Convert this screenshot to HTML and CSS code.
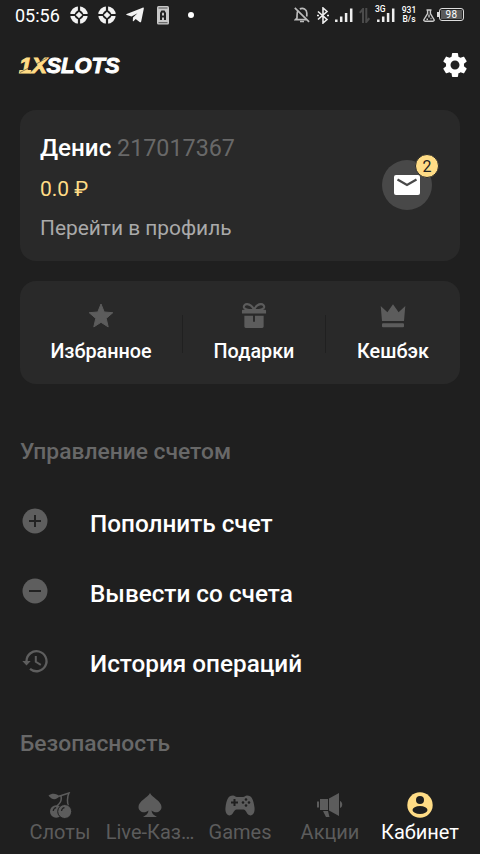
FILE: index.html
```html
<!DOCTYPE html>
<html lang="ru">
<head>
<meta charset="utf-8">
<title>1XSLOTS</title>
<link rel="stylesheet" href="styles.css">
</head>
<body>
<svg width="0" height="0" class="defs">
  <symbol id="ring" viewBox="0 0 18 18"><circle cx="9" cy="9" r="6.6" fill="none" stroke="#f2f2f2" stroke-width="4.4"/><path d="M9 0v18M0 9h18" stroke="#1f1f1f" stroke-width="2.2"/><path d="M9 5.7l3.3 3.3L9 12.3 5.7 9z" fill="#f2f2f2"/></symbol>
  <symbol id="signal" viewBox="0 0 18 15"><path d="M1.3 11.500v2.500M6.2 8.500v5.500M11.1 5V14M16.2.5V14" stroke="#eee" stroke-width="2.500"/></symbol>
</svg>
<div class="status">
  <span class="time">05:56</span>
  <svg class="ring" width="18" height="18"><use href="#ring"/></svg>
  <svg class="ring" width="18" height="18"><use href="#ring"/></svg>
  <svg class="plane" width="18" height="16" viewBox="0 0 18 16"><path fill="#f2f2f2" d="M.7 7.1L16.6.7c.8-.3 1.4.2 1.2 1.1l-2.6 12.6c-.2.9-.9 1.1-1.6.6L9.7 12l-2 2c-.4.4-.9.3-.9-.3l.2-3.200 4.500-4.300-6 3.400L.8 8.100c-.8-.2-.8-.7-.1-1z"/></svg>
  <svg class="box" width="12" height="19" viewBox="0 0 12 19"><rect width="12" height="18.5" rx="1.5" fill="#c8c8c8"/><path d="M1.5 2h9M1.5 16.7h9" stroke="#555" stroke-width="1"/><path d="M4 14V7.3L5 5.5h2l1 1.8V14M4 10.5h4" fill="none" stroke="#222" stroke-width="2"/></svg>
  <svg class="dot" width="6" height="6"><circle cx="3" cy="3" r="3" fill="#fff"/></svg>
  <svg class="bell" width="16" height="16" viewBox="0 0 16 16" fill="none" stroke="#bbb" stroke-width="1.7"><path d="M4 3.5C2.8 5 3.1 7 3 11l-1.5 1.7h11M5.8 1.9C9 .5 12.8 2 12.8 6v3.6"/><path d="M6 14.5h4M.8.8l14.3 14"/></svg>
  <svg class="bt" width="12" height="17" viewBox="0 0 12 17"><path d="M1 4.500l9 8L6 16V1l4 3.500-9 8M0 8.500h2M10 8.500h2" fill="none" stroke="#eee" stroke-width="1.600"/></svg>
  <svg class="sig" width="18" height="15"><use href="#signal"/></svg>
  <svg class="updown" width="11" height="15" viewBox="0 0 11 15"><path d="M4 15V1L.8 4.800M7.300 0v14l3-3.800" fill="none" stroke="#4b4b4b" stroke-width="2"/></svg>
  <div class="net"><span>3G</span><svg width="18" height="15"><use href="#signal"/></svg></div>
  <div class="speed">931<br>B/s</div>
  <svg class="flask" width="12" height="13" viewBox="0 0 12 13"><path d="M3.500 1h5M4.600 1v3.500L1 10.500c-.5 1 0 1.700 1 1.700h8c1 0 1.500-.7 1-1.700L7.400 4.500V1M6 5.500v3M3.500 10.200h1.500M7.500 9.500h1" fill="none" stroke="#ccc" stroke-width="1.400"/></svg>
  <div class="batt"><span>98</span></div>
</div>
<header>
  <svg class="brand" width="106" height="28" viewBox="-2 -4 106 28"><text class="logo gold" x="-1" y="15.500" textLength="28" lengthAdjust="spacingAndGlyphs">1X</text><path d="M0 15.500l12-6.200L27 1" stroke="#1f1f1f" stroke-width=".5" fill="none"/><text class="logo white" x="26.500" y="15.500" textLength="73" lengthAdjust="spacingAndGlyphs">SLOTS</text></svg>
  <svg width="30" height="30" viewBox="0 0 24 24"><path fill="#fff" d="M19.140 12.940c.040-.3.060-.610.060-.940 0-.320-.020-.640-.070-.940l2.030-1.580c.180-.140.230-.410.120-.610l-1.920-3.320c-.120-.220-.370-.290-.590-.220l-2.390.960c-.5-.380-1.030-.7-1.620-.940l-.360-2.540c-.040-.240-.240-.410-.480-.410h-3.840c-.240 0-.430.170-.470.410l-.360 2.540c-.590.240-1.130.570-1.620.940l-2.390-.960c-.220-.080-.470 0-.590.220L2.740 8.870c-.120.210-.080.470.120.610l2.030 1.580c-.050.3-.090.630-.090.940s.020.640.070.940l-2.030 1.580c-.180.140-.230.410-.120.610l1.920 3.320c.120.220.370.290.590.220l2.390-.960c.5.380 1.030.7 1.620.940l.360 2.540c.050.240.240.410.480.410h3.840c.240 0 .440-.170.470-.410l.360-2.540c.590-.240 1.130-.560 1.620-.940l2.390.960c.220.080.470 0 .590-.220l1.920-3.320c.120-.220.070-.470-.120-.610l-2.010-1.580zM12 15.600c-1.980 0-3.600-1.620-3.600-3.600s1.620-3.600 3.600-3.600 3.600 1.620 3.600 3.600-1.620 3.600-3.600 3.600z"/></svg>
</header>
<main>
  <section class="profile">
    <div>
      <p class="name"><b>Денис</b> <span>217017367</span></p>
      <p class="money">0.0 ₽</p>
      <p class="go">Перейти в профиль</p>
    </div>
    <div class="mail">
      <svg width="26" height="20" viewBox="0 0 26 20"><rect width="26" height="20" rx="2" fill="#fff"/><path d="M3.500 4.500L13 10l9.500-5.500" fill="none" stroke="#484848" stroke-width="2.200"/></svg>
      <span class="badge">2</span>
    </div>
  </section>
  <section class="quick">
    <div class="q1"><svg width="26" height="26" viewBox="0 0 26 26"><path d="M13 1.500l3.200 8 8.600.7-6.600 5.700 2 8.500-7.200-4.600-7.200 4.600 2-8.500-6.600-5.700 8.600-.7z" fill="#5c5c5c" stroke="#5c5c5c" stroke-linejoin="round"/></svg><b>Избранное</b></div>
    <i></i>
    <div class="q2"><svg width="26" height="28" viewBox="0 0 26 28"><path d="M13 8C9 9 3 8 2.500 5.500 1.800 1.500 9 0 13 8zc4 1 10 0 10.500-2.500C24.200 1.500 17 0 13 8z" fill="none" stroke="#5c5c5c" stroke-width="2.200"/><path d="M1.500 8h23a1 1 0 011 1v3H.5V9a1 1 0 011-1zM3 14.300h9v6.200h2v-6.200h9v11.200a1.500 1.500 0 01-1.500 1.500h-17A1.500 1.500 0 013 25.500z" fill="#5c5c5c"/></svg><b>Подарки</b></div>
    <i></i>
    <div class="q3"><svg width="26" height="26" viewBox="0 0 26 26"><path d="M.7 3.500l6.700 6.300L13 1.700l5.600 8.100 6.700-6.300L24 18.500H2z" fill="#5c5c5c"/><rect x="2" y="20.700" width="22" height="4" rx="1" fill="#5c5c5c"/></svg><b>Кешбэк</b></div>
  </section>
  <h2>Управление счетом</h2>
  <ul>
    <li><svg width="30" height="30" viewBox="0 0 30 30"><circle cx="15" cy="15" r="12.500" fill="#5e5e5e"/><path d="M9 15h12M15 9v12" stroke="#222" stroke-width="2"/></svg><span>Пополнить счет</span></li>
    <li><svg width="30" height="30" viewBox="0 0 30 30"><circle cx="15" cy="15" r="12.500" fill="#5e5e5e"/><path d="M9 15h12" stroke="#222" stroke-width="2"/></svg><span>Вывести со счета</span></li>
    <li><svg width="30" height="30" viewBox="0 0 30 30"><path d="M6.500 15a10 10 0 1 1 3.500 7.800" fill="none" stroke="#5e5e5e" stroke-width="2.300"/><path d="M2.300 15h8.400l-4.200 4.500z" fill="#5e5e5e"/><path d="M15.800 10v5.800l5 3" fill="none" stroke="#5e5e5e" stroke-width="2"/></svg><span>История операций</span></li>
  </ul>
  <h2 class="security">Безопасность</h2>
</main>
<nav>
  <a><svg width="30" height="28" viewBox="0 0 30 28"><path d="M3.500 3.500C7 .5 12 1.500 14.500 4 11.500 8.500 6.500 8 3.500 3.500z" fill="#5c5c5c"/><path d="M14 4.300L24 1c-2 4-2 8-.7 13M16 4c1 5-1 7-4 10" fill="none" stroke="#5c5c5c" stroke-width="1.500"/><circle cx="11.200" cy="19.500" r="6.200" fill="#5c5c5c"/><circle cx="19.700" cy="19.500" r="7" fill="#5c5c5c" stroke="#1f1f1f"/><path d="M8.200 19q.5-3 3-3.300M16.500 19q.5-3 3-3.300" stroke="#222" fill="none" stroke-width="1.200"/></svg><span>Слоты</span></a>
  <a><svg width="30" height="28" viewBox="0 0 30 28"><path d="M15 1c2 4.500 11.500 8 11.500 14 0 5-6 7-10 3.500.3 3 2 4.500 5.500 6.500H8c3.500-2 5.200-3.500 5.500-6.500-4 3.500-10 1.500-10-3.500C3.500 9 13 5.500 15 1z" fill="#5c5c5c"/></svg><span>Live-Каз…</span></a>
  <a><svg width="34" height="28" viewBox="0 0 34 28"><path d="M10 3.500c2 0 2 1.500 4 1.500h6c2 0 2-1.500 4-1.500 5 0 6.500 4.500 7.500 12 .7 6-2.500 9-5.500 7.500-2.500-1.200-3-5.500-5.500-5.500h-7C11 17.500 10.500 21.800 8 23c-3 1.500-6.200-1.500-5.500-7.500 1-7.500 2.500-12 7.500-12z" fill="#5c5c5c"/><path d="M11.500 7v7M8 10.500h7" stroke="#1f1f1f" stroke-width="2"/><g fill="#1f1f1f"><circle cx="23" cy="7.500" r="1.300"/><circle cx="23" cy="13.500" r="1.300"/><circle cx="20" cy="10.500" r="1.300"/><circle cx="26" cy="10.500" r="1.300"/></g></svg><span>Games</span></a>
  <a><svg width="30" height="28" viewBox="0 0 30 28"><path d="M5 7h8v11H5zM14 6.500L24 1v23l-10-5.500zM25 9c3 1 3 6 0 7zM2 9.500h2v6H2zM8 19h5l1.500 6H11z" fill="#5c5c5c"/></svg><span>Акции</span></a>
  <a class="on"><svg width="30" height="28" viewBox="0 0 30 28"><circle cx="15" cy="13" r="12.700" fill="#ffdc86"/><circle cx="15" cy="8" r="4" fill="#1f1f1f"/><ellipse cx="15" cy="18" rx="7.500" ry="4" fill="#1f1f1f"/></svg><span>Кабинет</span></a>
</nav>
</body>
</html>
```

FILE: styles.css
```css
* { box-sizing: border-box; }
body { margin: 0; width: 480px; height: 854px; overflow: hidden; background: #1f1f1f; color: #fff; font-family: Roboto, "Liberation Sans", sans-serif; display: flex; flex-direction: column; }
p, h2, ul { margin: 0; padding: 0; }
svg { display: block; flex: none; }
.defs { position: absolute; }
.status { height: 30px; display: flex; align-items: center; padding-left: 15px; }
.time { width: 55px; font-size: 18px; line-height: 30px; padding-top: 2px; }
.ring { margin-right: 10px; }
.plane { margin-right: 13px; }
.box { margin-right: 19px; }
.dot { margin-right: 100px; }
.bell { margin-right: 7px; }
.bt { margin-right: 6px; }
.updown { margin: 0 5px 0 6px; }
.net { width: 19px; height: 17px; position: relative; padding: 1px 0 0 2px; }
.net span { position: absolute; left: 0; top: -2px; font-size: 8.5px; line-height: 9px; font-weight: 500; background: #1f1f1f; }
.speed { width: 16px; margin: 0 6px 0 7px; font-size: 8.5px; line-height: 9px; font-weight: 500; text-align: center; }
.flask { margin-right: 4px; }
.batt { width: 25px; height: 13px; border: 1.5px solid #ddd; border-radius: 3px; padding: 1px; position: relative; margin-top: -2px; }
.batt::before { content: ""; position: absolute; left: -3px; top: 3px; width: 2px; height: 5px; background: #ddd; }
.batt span { display: block; height: 9px; background: #5a5a5a; font-size: 10px; line-height: 10px; font-weight: 400; letter-spacing: .5px; text-align: center; }
header { height: 80px; display: flex; justify-content: space-between; align-items: flex-start; padding: 20px 10px 0 18px; }
.brand { margin-top: 3px; }
.logo { font: italic 700 21.5px "Liberation Sans", Arial, sans-serif; stroke-width: .9px; }
.gold { fill: #ffdc86; stroke: #ffdc86; }
.white { fill: #fff; stroke: #fff; }
main { padding: 0 20px; height: 670px; }
.profile { height: 151px; border-radius: 16px; background: #292929; display: flex; justify-content: space-between; padding: 20px 28px 0 20px; }
.profile p { line-height: 36px; white-space: nowrap; }
.name { font-size: 23.3px; color: #686868; }
.name b { font-size: 24.2px; font-weight: 500; color: #fff; }
.money { font-size: 21px; color: #ffdc86; padding-top: 5px; }
.go { font-size: 20.9px; color: #aaa; padding-top: 3px; }
.mail { width: 50px; height: 50px; margin-top: 30px; border-radius: 50%; background: #484848; display: flex; align-items: center; justify-content: center; position: relative; }
.badge { position: absolute; left: 33px; top: -6px; width: 24px; height: 24px; border: 1.5px solid #292929; border-radius: 50%; background: #ffdc86; color: #222; font-size: 16px; line-height: 23px; text-align: center; }
.quick { height: 103px; margin-top: 20px; border-radius: 16px; background: #292929; display: flex; }
.quick div { display: flex; flex-direction: column; align-items: center; padding-top: 21px; }
.quick svg { height: 27px; }
.q1 { width: 162px; }
.q2 { width: 142px; }
.q3 { width: 134px; }
.quick i { width: 1px; height: 38px; margin-top: 34px; background: #202020; }
.quick b { font-size: 19.8px; line-height: 24px; margin-top: 11px; font-weight: 500; }
h2 { margin-top: 53px; font-size: 22.8px; line-height: 30px; font-weight: 500; color: #686868; white-space: nowrap; }
ul { list-style: none; padding-top: 19px; }
li { height: 70px; display: flex; align-items: center; font-size: 24.3px; font-weight: 500; }
li svg { margin: -1px 40px 0 0; }
li span { padding-top: 5px; white-space: nowrap; }
.security { margin-top: 33px; }
nav { height: 74px; display: grid; grid-template-columns: repeat(5, 90px); padding: 12px 15px 0; color: #5c5c5c; font-size: 20px; }
nav a { display: flex; flex-direction: column; align-items: center; white-space: nowrap; }
nav span { line-height: 24px; }
.on { color: #fff; }
```
